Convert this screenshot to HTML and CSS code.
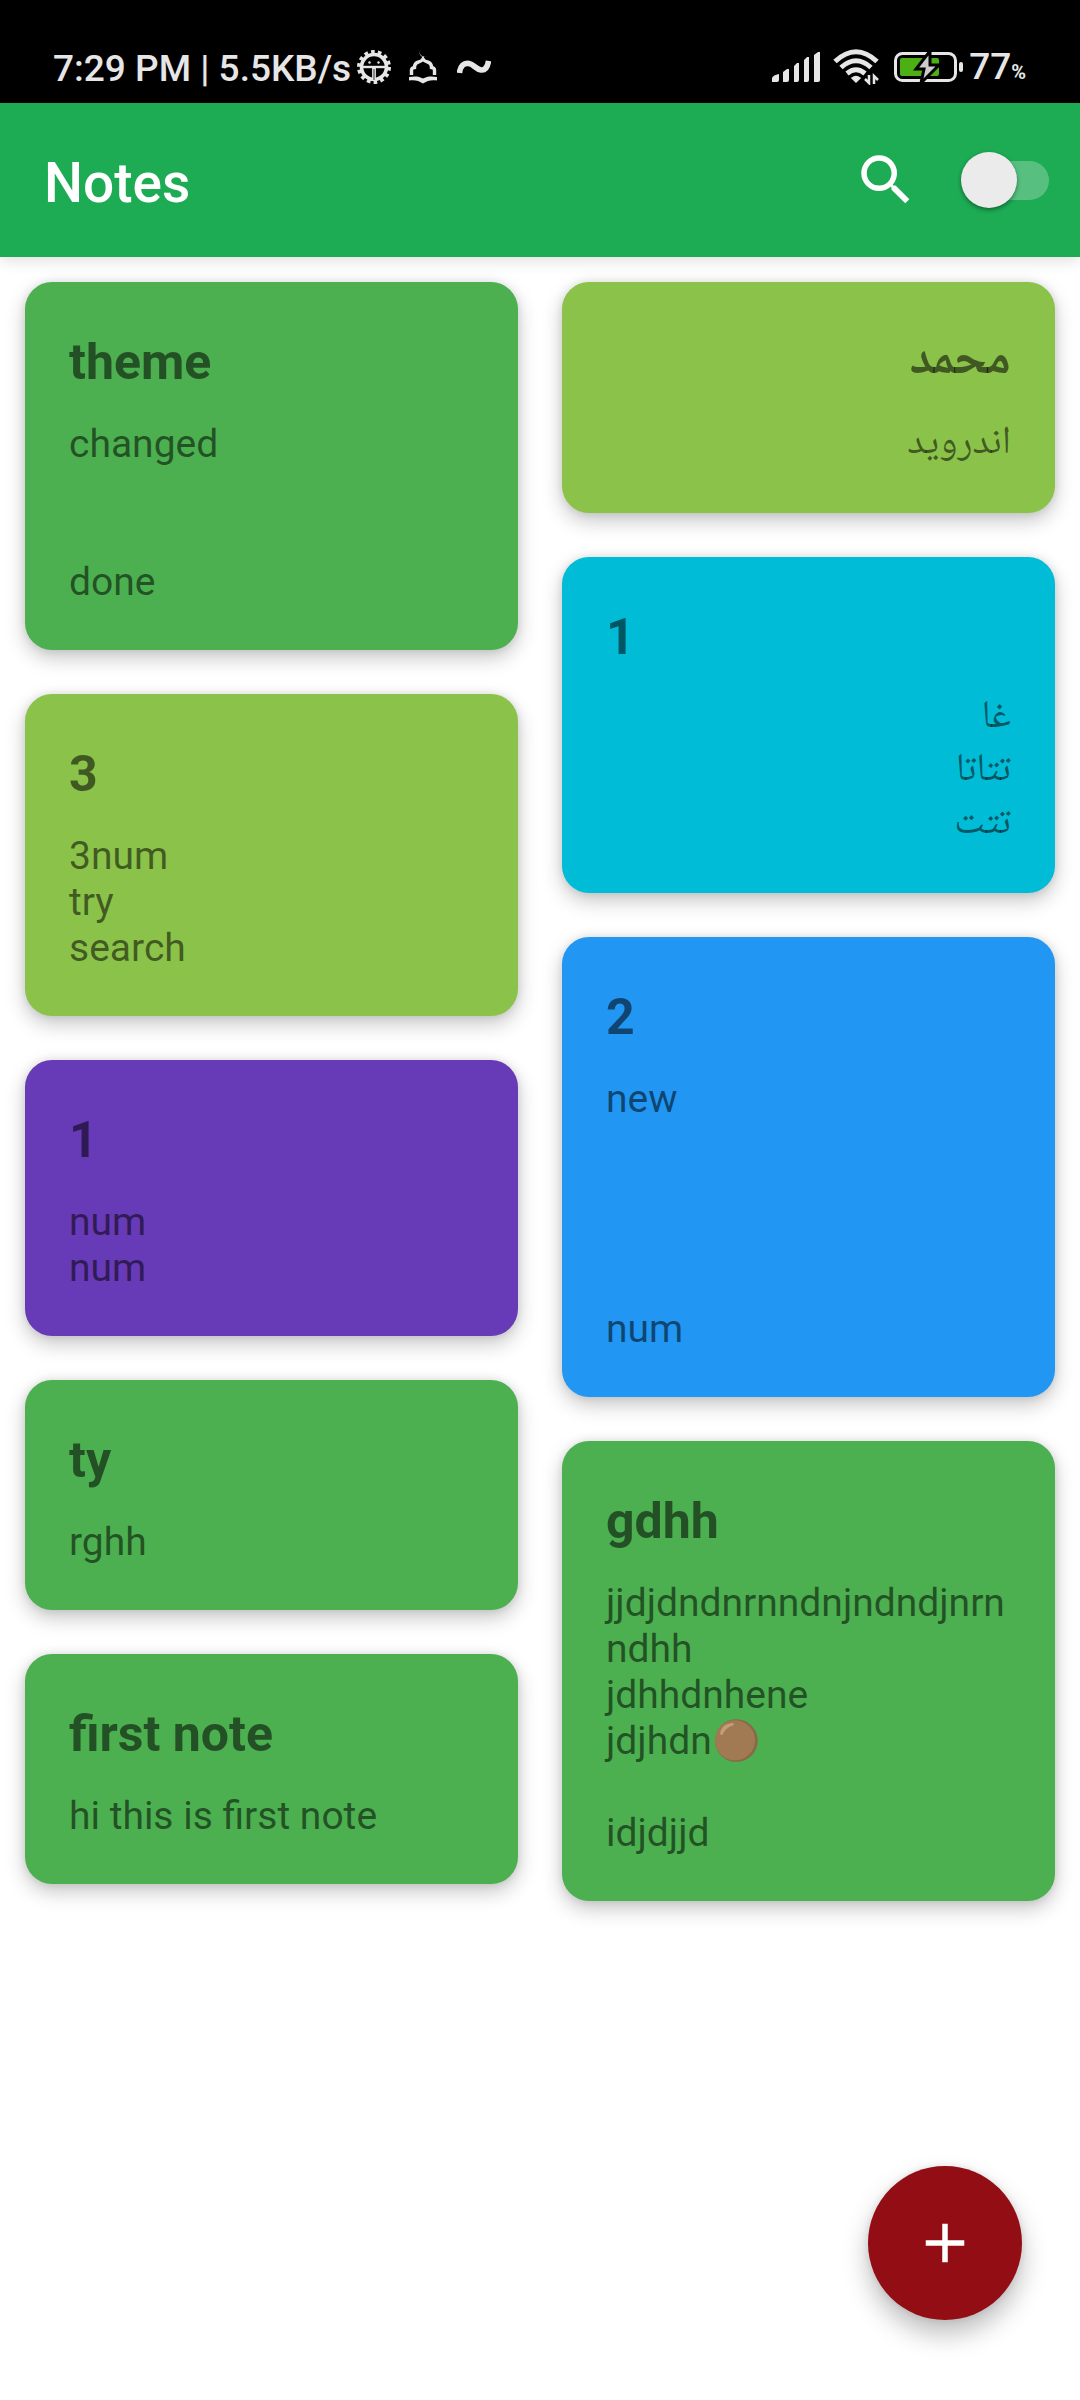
FILE: index.html
```html
<!DOCTYPE html>
<html lang="en">
<head>
<meta charset="utf-8">
<meta name="viewport" content="width=device-width, initial-scale=1">
<title>Notes</title>
<link rel="stylesheet" href="styles.css">
</head>
<body>
<div class="status-bar">
  <div class="status-group status-left">
    <span class="status-text">7:29 PM | 5.5KB/s</span>
    <svg class="status-gear" width="34" height="34" viewBox="0 0 34 34" aria-hidden="true">
      <circle cx="17" cy="17" r="15" fill="none" stroke="#e6e6e6" stroke-width="4" stroke-dasharray="3.600 3.132"/>
      <circle cx="17" cy="17" r="12.500" fill="none" stroke="#e6e6e6" stroke-width="3.600"/>
      <path d="M5 17h24" stroke="#e6e6e6" stroke-width="2.400" fill="none"/>
      <path d="M17 18v12" stroke="#e6e6e6" stroke-width="3.800" fill="none"/>
      <path d="M17 19v11" stroke="#000" stroke-width=".8" fill="none"/>
      <circle cx="12.500" cy="12.500" r="1.200" fill="#e6e6e6"/><circle cx="21.500" cy="12.500" r="1.200" fill="#e6e6e6"/>
    </svg>
    <svg class="status-mosque" width="28" height="34" viewBox="0 0 28 34" aria-hidden="true">
      <path d="M11.500 0a4 4 0 1 0 6.500 5.500A4.300 4.300 0 0 1 11.500 0z" fill="#e6e6e6"/>
      <path d="M2.500 25v-5q0-2 3-2.500 0-4.500 4-5.500 3-.5 4.500-3 1.500 2.500 4.500 3 4 1 4 5.500 3 .5 3 2.500v5" fill="none" stroke="#e6e6e6" stroke-width="3.400"/>
      <path d="M0 27c5-1 10-1 14 1.500 4-2.500 9-2.500 14-1.500v3.500c-5-1-10 0-14 3-4-3-9-4-14-3z" fill="#e6e6e6"/>
    </svg>
    <svg class="status-wave" width="34" height="14" viewBox="0 0 34 14" aria-hidden="true">
      <path d="M2.500 13C3 6 7 2.500 12 3.500c5 1 7 6 12 6.500 4 .5 6.500-2 7.500-9" fill="none" stroke="#e6e6e6" stroke-width="5.600"/>
    </svg>
  </div>
  <div class="status-group">
    <svg class="status-signal" width="48" height="30" viewBox="0 0 48 30" fill="#e6e6e6" aria-hidden="true">
      <path d="M0 30v-4q1-3 7-4v6q0 2-2 2zM11 30V20l4-3h2v11q0 2-2 2zM22 30V14l3-3h2v17q0 2-2 2zM32 30V8l3-3h2v23q0 2-2 2zM42 30V3l4-3h2v28q0 2-2 2z"/>
    </svg>
    <svg class="status-wifi" width="46" height="36" viewBox="0 0 46 36" fill="none" stroke="#e6e6e6" stroke-width="5" aria-hidden="true">
      <path d="M2 12.500Q23-7 44 12.500"/><path d="M8 18.500Q23 5 38 18.500"/><path d="M14 24.500Q23 17 32 24.500"/>
      <path d="M19 29q4-3 8 0l-4 4z" fill="#e6e6e6" stroke-width="1.500"/>
      <path d="M36 26v8l-4-4M41 35v-8l4 4" stroke-width="2.500"/>
    </svg>
    <svg class="status-battery" width="69" height="32" viewBox="0 0 69 32" aria-hidden="true">
      <rect x="1.500" y="2.500" width="60" height="27" rx="7" fill="none" stroke="#e6e6e6" stroke-width="3"/>
      <rect x="6" y="7" width="39" height="18" rx="2" fill="#4caf14"/>
      <rect x="65" y="11" width="4" height="10" rx="2" fill="#e6e6e6"/>
      <path d="M36 0 22 18h8l-3 14 18-18h-9z" fill="#ccc" stroke="#000" stroke-width="3"/>
    </svg>
    <span class="status-text">77<span class="status-percent">%</span></span>
  </div>
</div>

<header class="app-bar">
  <h1 class="app-title">Notes</h1>
  <button class="icon-button" type="button" aria-label="Search">
    <svg width="66" height="66" viewBox="0 0 24 24" fill="#fff" aria-hidden="true">
      <path d="M15.500 14h-.79l-.28-.27A6.471 6.471 0 0 0 16 9.500 6.500 6.500 0 1 0 9.500 16c1.610 0 3.090-.59 4.230-1.570l.27.28v.79l5 4.990L20.490 19l-4.990-5zm-6 0C7.010 14 5 11.990 5 9.500S7.010 5 9.500 5 14 7.010 14 9.500 11.990 14 9.500 14z"/>
    </svg>
  </button>
  <input class="switch" type="checkbox" role="switch" aria-label="Dark theme">
</header>

<main class="notes">
  <div class="column">
    <article class="note green">
      <h2 class="note-title">theme</h2>
      <p class="note-body">changed


done</p>
    </article>
    <article class="note lime">
      <h2 class="note-title">3</h2>
      <p class="note-body">3num
try
search</p>
    </article>
    <article class="note purple">
      <h2 class="note-title">1</h2>
      <p class="note-body">num
num</p>
    </article>
    <article class="note green">
      <h2 class="note-title">ty</h2>
      <p class="note-body">rghh</p>
    </article>
    <article class="note green">
      <h2 class="note-title">first note</h2>
      <p class="note-body">hi this is first note</p>
    </article>
  </div>
  <div class="column">
    <article class="note lime">
      <h2 class="note-title" dir="rtl" lang="ar">محمد</h2>
      <p class="note-body" dir="rtl" lang="ar">اندرويد</p>
    </article>
    <article class="note cyan">
      <h2 class="note-title">1</h2>
      <p class="note-body" dir="rtl" lang="ar">غا
تتاتا
تتت</p>
    </article>
    <article class="note blue">
      <h2 class="note-title">2</h2>
      <p class="note-body">new




num</p>
    </article>
    <article class="note green">
      <h2 class="note-title">gdhh</h2>
      <p class="note-body">jjdjdndnrnndnjndndjnrnndhh
jdhhdnhene
jdjhdn<span class="emoji">🟤</span>

idjdjjd</p>
    </article>
  </div>
</main>

<button class="fab" type="button" aria-label="Add note">
  <svg width="66" height="66" viewBox="0 0 24 24" fill="#fff" aria-hidden="true"><path d="M19 13h-6v6h-2v-6H5v-2h6V5h2v6h6z"/></svg>
</button>
</body>
</html>
```

FILE: styles.css
```css
* {
  box-sizing: border-box;
}

body {
  margin: 0;
  min-height: 100vh;
  background: #fff;
  font-family: Roboto, "Noto Naskh Arabic UI", "Noto Naskh Arabic", "DejaVu Sans", sans-serif;
}

button {
  border: 0;
  padding: 0;
  cursor: pointer;
}

svg {
  display: block;
}

/* Status bar */
.status-bar {
  display: flex;
  justify-content: space-between;
  height: 103px;
  padding: 46px 54px 0 53px;
  background: #000;
  color: #e6e6e6;
}

.status-group {
  display: flex;
  align-items: center;
  height: 42px;
}

.status-text {
  padding-top: 4px;
  font-size: 37px;
  font-weight: 500;
  line-height: 42px;
}

.status-gear {
  margin-left: 6px;
}

.status-mosque {
  margin-left: 18px;
}

.status-wave {
  margin-left: 20px;
}

.status-wifi {
  margin-left: 13px;
}

.status-battery {
  margin: 0 6px 0 15px;
}

.status-percent {
  font-size: 20px;
  font-weight: 700;
}

/* App bar */
.app-bar {
  position: relative;
  display: flex;
  align-items: center;
  height: 154px;
  padding: 0 31px 0 44px;
  background: #1dab54;
  box-shadow: 0 2px 16px rgba(0, 0, 0, 0.15);
}

.app-title {
  flex: 1;
  margin: 0;
  padding-top: 6px;
  color: #fff;
  font-size: 55px;
  font-weight: 500;
  line-height: 64px;
}

.icon-button {
  margin-right: 42px;
  background: none;
}

.switch {
  appearance: none;
  position: relative;
  display: flex;
  align-items: center;
  width: 88px;
  height: 56px;
  margin: 0;
  cursor: pointer;
}

.switch::before {
  content: "";
  width: 80px;
  height: 39px;
  margin-left: 8px;
  border-radius: 20px;
  background: #57c080;
}

.switch::after {
  content: "";
  position: absolute;
  left: 0;
  top: 0;
  width: 56px;
  height: 56px;
  border-radius: 50%;
  background: #ebebeb;
  box-shadow: 0 2px 4px rgba(0, 0, 0, 0.4);
}

.switch:checked::after {
  left: 32px;
}

/* Notes */
.notes {
  display: grid;
  grid-template-columns: 1fr 1fr;
  column-gap: 44px;
  padding: 25px 25px 240px;
}

.column {
  display: flex;
  flex-direction: column;
  gap: 44px;
  min-width: 0;
}

.note {
  padding: 51px 44px 45px;
  border-radius: 27px;
  box-shadow: 0 8px 20px rgba(0, 0, 0, 0.22), 0 0 8px rgba(0, 0, 0, 0.1);
  color: rgba(0, 0, 0, 0.54);
}

.note-title {
  margin: 0 0 29px;
  font-size: 50px;
  font-weight: 700;
  line-height: 59px;
}

.note-title[dir="rtl"] {
  line-height: 60px;
}

.note-body {
  margin: 0;
  font-size: 39px;
  line-height: 46px;
  white-space: pre-line;
  overflow-wrap: anywhere;
}

.note-body[dir="rtl"] {
  margin: -3px 0 -4px;
  line-height: 53px;
}

.emoji {
  color: rgba(0, 0, 0, 0.8);
}

.green { background: #4caf50; }
.lime { background: #8bc34a; }
.purple { background: #673ab7; }
.cyan { background: #00bcd7; }
.blue { background: #2196f3; }

/* Add button */
.fab {
  position: fixed;
  right: 58px;
  bottom: 80px;
  display: grid;
  place-items: center;
  width: 154px;
  height: 154px;
  border-radius: 50%;
  background: #920e14;
  box-shadow: 0 14px 26px rgba(0, 0, 0, 0.26), 0 0 8px rgba(0, 0, 0, 0.1);
}
```
